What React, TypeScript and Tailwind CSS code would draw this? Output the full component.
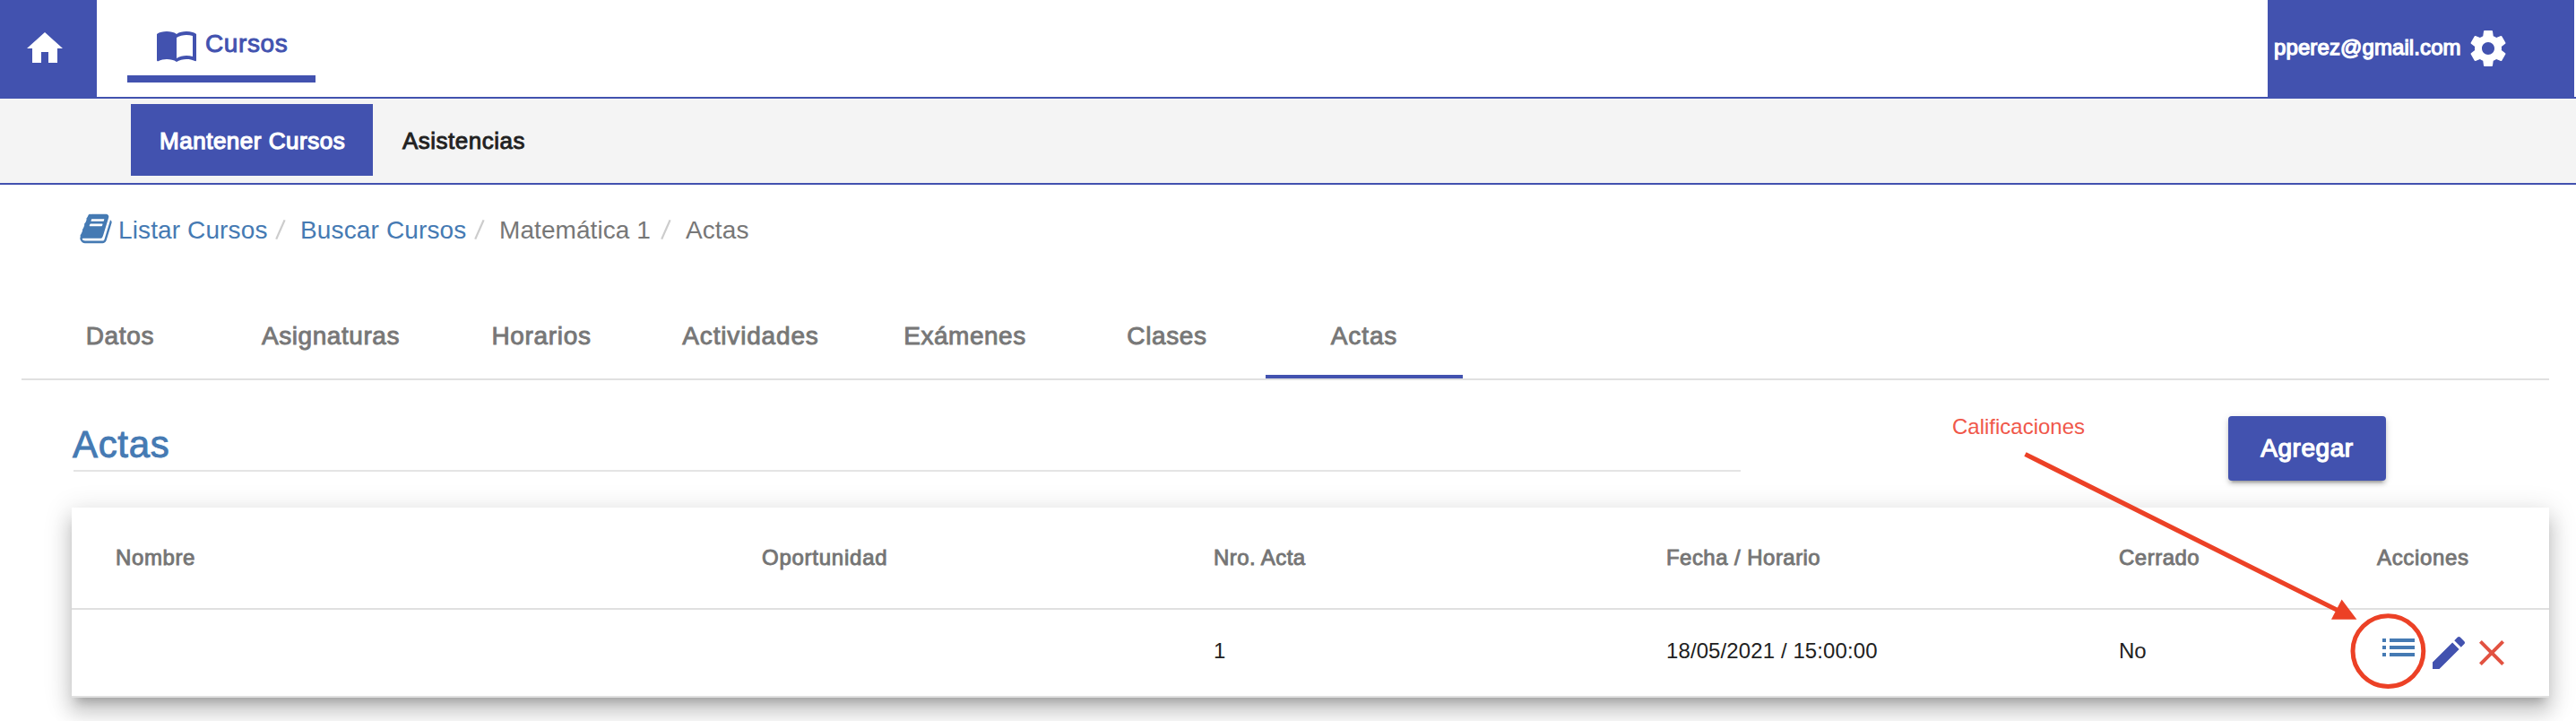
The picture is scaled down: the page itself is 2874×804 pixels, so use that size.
import React from "react";

function Icon({ d, className = "" }: { d: string; className?: string }) {
  return (
    <svg viewBox="0 0 24 24" fill="currentColor" className={`h-12 w-12 shrink-0 ${className}`}>
      <path d={d} />
    </svg>
  );
}

const HOME = "M10 20v-6h4v6h5v-8h3L12 3 2 12h3v8z";
const BOOK =
  "M21 5c-1.11-.35-2.33-.5-3.5-.5-1.95 0-4.05.4-5.5 1.500-1.450-1.100-3.550-1.500-5.500-1.500S2.450 4.900 1 6v14.650c0 .25.25.5.5.5.1 0 .15-.05.25-.05C3.100 20.450 5.050 20 6.500 20c1.950 0 4.050.4 5.500 1.500 1.350-.85 3.800-1.500 5.500-1.500 1.650 0 3.350.3 4.750 1.050.1.05.15.05.25.05.25 0 .5-.25.5-.5V6c-.6-.45-1.250-.75-2-1zm0 13.500c-1.100-.35-2.300-.5-3.500-.5-1.700 0-4.150.65-5.500 1.500V8c1.350-.85 3.800-1.500 5.500-1.500 1.200 0 2.400.15 3.500.5v11.500z";
const GEAR =
  "M19.43 12.98c.04-.32.07-.64.07-.98s-.03-.66-.07-.98l2.11-1.65c.19-.15.24-.42.12-.64l-2-3.46c-.12-.22-.39-.3-.61-.22l-2.49 1c-.52-.4-1.08-.73-1.69-.98l-.38-2.65C14.46 2.18 14.25 2 14 2h-4c-.25 0-.46.18-.49.42l-.38 2.65c-.61.25-1.17.59-1.69.98l-2.49-1c-.23-.09-.49 0-.61.22l-2 3.46c-.13.22-.07.49.12.64l2.11 1.65c-.04.32-.07.65-.07.98s.03.66.07.98l-2.11 1.65c-.19.15-.24.42-.12.64l2 3.46c.12.22.39.3.61.22l2.49-1c.52.4 1.08.73 1.69.98l.38 2.65c.03.24.24.42.49.42h4c.25 0 .46-.18.49-.42l.38-2.65c.61-.25 1.17-.59 1.69-.98l2.49 1c.23.09.49 0 .61-.22l2-3.46c.12-.22.07-.49-.12-.64l-2.11-1.65zM12 15.5c-1.93 0-3.5-1.57-3.5-3.5s1.57-3.5 3.5-3.5 3.5 1.57 3.5 3.5-1.57 3.5-3.5 3.5z";
const LIST = "M3 13h2v-2H3v2zm0 4h2v-2H3v2zm0-8h2V7H3v2zm4 4h14v-2H7v2zm0 4h14v-2H7v2zM7 7v2h14V7H7z";
const EDIT =
  "M3 17.25V21h3.75L17.81 9.94l-3.75-3.75L3 17.25zM20.71 7.04c.39-.39.39-1.02 0-1.41l-2.34-2.34c-.39-.39-1.02-.39-1.41 0l-1.83 1.83 3.75 3.75 1.83-1.83z";
const CLEAR =
  "M19 6.41L17.59 5 12 10.59 6.41 5 5 6.41 10.59 12 5 17.59 6.41 19 12 13.41 17.59 19 19 17.59 13.41 12z";
const NOTEBOOK =
  "M1639 478q40 57 18 129l-275 906q-19 64-76.500 107.500t-122.500 43.500h-923q-77 0-148.500-53.500t-99.500-131.500q-24-67-2-127 0-4 3-27t4-37q1-8-3-21.500t-3-19.500q2-11 8-21t16.500-23.500 16.500-23.500q23-38 45-91.500t30-91.500q3-10 .5-30t-.5-28q3-11 17-28t17-23q21-36 42-92t25-90q1-9-2.500-32t.5-28q4-13 22-30.500t22-22.500q19-26 42.500-84.500t27.500-96.500q1-8-3-25.500t-2-26.500q2-8 9-18t18-23 17-21q8-12 16.500-30.500t15-35 16-36 19.500-32 26.500-23.500 36-11.500 47.500 5.500l-1 3q38-9 51-9h761q74 0 114 56t18 130l-274 906q-36 119-71.500 153.500t-128.500 34.500h-869q-27 0-38 15-11 16-1 43 24 70 144 70h923q29 0 56-15.500t35-41.500l300-987q7-22 5-57 38 15 59 43zm-1064 2q-4 13 2 22.500t20 9.500h608q13 0 25.500-9.500t16.500-22.500l21-64q4-13-2-22.500t-20-9.500h-608q-13 0-25.500 9.500t-16.500 22.500zm-83 256q-4 13 2 22.500t20 9.500h608q13 0 25.500-9.500t16.500-22.500l21-64q4-13-2-22.500t-20-9.500h-608q-13 0-25.500 9.500t-16.500 22.500z";

const medium = "[-webkit-text-stroke:0.9px_currentColor]";
const strong = "[-webkit-text-stroke:1.25px_currentColor]";

const tabs = [
  { label: "Datos", cls: "w-[220px] tracking-[0.69px]" },
  { label: "Asignaturas", cls: "w-[250px] tracking-[0.56px]" },
  { label: "Horarios", cls: "w-[220px] tracking-[0.68px]" },
  { label: "Actividades", cls: "w-[247px] tracking-[0.83px]" },
  { label: "Exámenes", cls: "w-[231px] tracking-[0.5px]" },
  { label: "Clases", cls: "w-[220px] tracking-[0.64px]" },
  { label: "Actas", cls: "w-[220px] tracking-[0.9px]", active: true },
];

const columns = [
  { label: "Nombre", cls: "tracking-[0.6px]" },
  { label: "Oportunidad", cls: "tracking-[0.75px]" },
  { label: "Nro. Acta", cls: "tracking-[0.42px]" },
  { label: "Fecha / Horario", cls: "tracking-[0.45px]" },
  { label: "Cerrado", cls: "tracking-[0.5px]" },
  { label: "Acciones", cls: "tracking-[0.66px]" },
];

const rowGrid = "grid grid-cols-[721px_504px_505px_505px_288px_1fr] items-center border-b-2 border-[#e0e0e0] pl-[49px]";

function Slash({ className }: { className: string }) {
  return (
    <svg viewBox="0 0 12 22" className={`h-[22px] w-3 shrink-0 ${className}`}>
      <path d="M1.200 21.600L10.600 0.400" stroke="#cccccc" strokeWidth="2.200" fill="none" />
    </svg>
  );
}

export default function App() {
  return (
    <div className="relative h-[804px] w-[2874px] overflow-hidden bg-white font-['Liberation_Sans',Arial,sans-serif]">
      <header className="flex h-[110px] border-b-2 border-[#4252af]">
        <div className="flex w-[108px] items-center bg-[#4252af] pl-[26px] text-white">
          <Icon d={HOME} />
        </div>
        <div className="ml-[34px] flex h-[92px] w-[210px] items-start gap-2 border-b-8 border-[#4252af] pt-[26px] pl-[31px] text-[#4252af]">
          <Icon d={BOOK} />
          <span className={`text-[28px] leading-[46px] tracking-[0.6px] ${medium}`}>Cursos</span>
        </div>
        <div className="mr-0.5 ml-auto flex w-[342px] items-center bg-[#4252af] pl-[7px] text-white">
          <span className={`w-[215px] pb-0.5 text-[24px] leading-[32px] tracking-[0.1px] ${strong}`}>pperez@gmail.com</span>
          <Icon d={GEAR} />
        </div>
      </header>

      <nav className="flex h-24 items-start border-b-2 border-[#4252af] bg-[#f4f4f4] pt-1.5 pl-[146px] text-[26px]">
        <div className={`h-20 w-[270px] bg-[#4252af] pl-8 leading-[82px] tracking-[0.52px] text-white ${strong}`}>
          Mantener Cursos
        </div>
        <div className={`ml-[33px] h-20 leading-[82px] tracking-[0.49px] text-[#212121] ${medium}`}>Asistencias</div>
      </nav>

      <div className="flex h-[138px] items-start pt-[30px] pl-[89px] text-[28px] leading-[41px] text-[#777777]">
        <svg viewBox="0 0 1664 1792" fill="#457ab3" className="h-[38px] w-[36px] shrink-0">
          <path d={NOTEBOOK} />
        </svg>
        <span className="ml-[7px] w-[175px] tracking-[0.12px] text-[#457ab3]">Listar Cursos</span>
        <Slash className="mt-[9px]" />
        <span className="ml-4 w-[194px] tracking-[0.14px] text-[#457ab3]">Buscar Cursos</span>
        <Slash className="mt-[9px]" />
        <span className="ml-4 w-[180px] tracking-[0.07px]">Matemática 1</span>
        <Slash className="mt-[9px]" />
        <span className="ml-4 tracking-[0.09px]">Actas</span>
      </div>

      <div className={`mr-[30px] ml-6 flex h-20 border-b-2 border-[#e0e0e0] text-[28px] leading-[62px] text-[#777777] ${medium}`}>
        {tabs.map((t) => (
          <div
            key={t.label}
            className={`h-[78px] border-b-4 text-center ${t.active ? "border-[#4252af]" : "border-transparent"} ${t.cls}`}
          >
            {t.label}
          </div>
        ))}
      </div>

      <div className="flex h-[142px] items-start pt-10 pl-[82px]">
        <h1 className="h-[62px] w-[1860px] border-b-2 border-[#e4e4e4] text-[42px] leading-[63px] tracking-[0.66px] text-[#457ab3] [-webkit-text-stroke:0.9px_currentColor]">
          <span className="-ml-px">Actas</span>
        </h1>
        <button
          className={`ml-[544px] h-[72px] w-44 rounded-[4px] bg-[#4252af] text-[28px] leading-[72px] tracking-[0.55px] text-white shadow-[0_6px_2px_-4px_rgba(0,0,0,0.2),0_4px_4px_0_rgba(0,0,0,0.14),0_2px_10px_0_rgba(0,0,0,0.12)] ${strong}`}
        >
          Agregar
        </button>
      </div>

      <div className="mr-[30px] ml-20 bg-white text-[24px] shadow-[0_10px_10px_-6px_rgba(0,0,0,0.2),0_16px_20px_2px_rgba(0,0,0,0.14),0_6px_28px_4px_rgba(0,0,0,0.12)]">
        <div className={`h-[114px] text-[#757575] ${rowGrid}`}>
          {columns.map((c) => (
            <div key={c.label} className={`${medium} ${c.cls}`}>
              {c.label}
            </div>
          ))}
        </div>
        <div className={`h-[98px] text-[#212121] ${rowGrid}`}>
          <div />
          <div />
          <div className="pb-1">1</div>
          <div className="pb-1 tracking-[0.1px]">18/05/2021 / 15:00:00</div>
          <div className="pb-1">No</div>
          <div className="flex items-center">
            <Icon d={LIST} className="mb-3 text-[#457ab3]" />
            <Icon d={EDIT} className="ml-2 text-[#4252af]" />
            <Icon d={CLEAR} className="text-[#e25241]" />
          </div>
        </div>
      </div>

      <div className="absolute top-[462px] left-[2178px] text-[24px] leading-[28px] text-[#f0574a]">Calificaciones</div>
      <svg viewBox="2240 490 480 300" className="pointer-events-none absolute top-[490px] left-[2240px] h-[300px] w-[480px]">
        <path d="M2259.500 506.500L2609 681" stroke="#ec4126" strokeWidth="5.200" />
        <path d="M2612.600 668.500L2629.400 690.800H2601z" fill="#ec4126" />
        <circle cx="2664.400" cy="726.100" r="39.400" fill="none" stroke="#ec4126" strokeWidth="5" />
      </svg>
    </div>
  );
}
